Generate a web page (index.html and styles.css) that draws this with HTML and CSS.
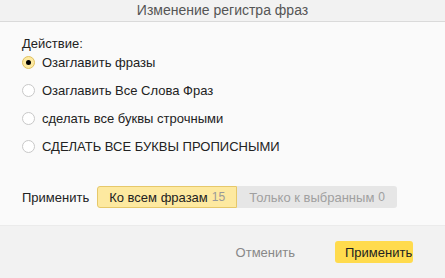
FILE: index.html
```html
<!DOCTYPE html>
<html>
<head>
  <meta charset="UTF-8">
  <link rel="stylesheet" href="styles.css">
</head>
<body>
  <div class="dialog">
    <div class="dialog-header">Изменение регистра фраз</div>
    <div class="dialog-body">
      <div class="section-title">Действие:</div>
      <div class="radio-group">
        <label class="radio checked"><span class="radio-box"></span>Озаглавить фразы</label>
        <label class="radio"><span class="radio-box"></span>Озаглавить Все Слова Фраз</label>
        <label class="radio"><span class="radio-box"></span>сделать все буквы строчными</label>
        <label class="radio"><span class="radio-box"></span>СДЕЛАТЬ ВСЕ БУКВЫ ПРОПИСНЫМИ</label>
      </div>
      <div class="apply-row">
        <span class="apply-label">Применить</span>
        <div class="segmented">
          <span class="seg seg-active">Ко всем фразам <span class="count">15</span></span>
          <span class="seg seg-disabled">Только к выбранным <span class="count">0</span></span>
        </div>
      </div>
    </div>
    <div class="dialog-footer">
      <button class="btn-cancel">Отменить</button>
      <button class="btn-apply">Применить</button>
    </div>
  </div>
</body>
</html>
```

FILE: styles.css
```css
body {
  margin: 0;
  font-family: Arial, "Liberation Sans", sans-serif;
  font-size: 13px;
  color: #222;
  background: #fafafa;
}
.dialog {
  width: 445px;
  height: 278px;
  display: flex;
  flex-direction: column;
  background: #fafafa;
}
.dialog-header {
  height: 21px;
  line-height: 21px;
  text-align: center;
  background: #f2f2f2;
  border-bottom: 1px solid #dadada;
  color: #555;
  font-size: 14px;
}
.dialog-body {
  flex: 1;
  padding: 14px 22px 0 22px;
}
.section-title {
  line-height: 15px;
  margin-bottom: -3px;
}
.radio-group {
  display: flex;
  flex-direction: column;
}
.radio {
  display: flex;
  align-items: center;
  height: 28px;
  gap: 7px;
}
.radio-box {
  width: 11px;
  height: 11px;
  border: 1px solid #c8c8c8;
  border-radius: 50%;
  background: #fff;
  position: relative;
}
.radio.checked .radio-box {
  background: #fde9a0;
  border-color: #e0c060;
}
.radio.checked .radio-box::after {
  content: "";
  position: absolute;
  left: 3px;
  top: 3px;
  width: 5px;
  height: 5px;
  border-radius: 50%;
  background: #000;
}
.apply-row {
  display: flex;
  align-items: center;
  margin-top: 26px;
  gap: 8px;
}
.segmented {
  display: flex;
  height: 22px;
}
.seg {
  display: flex;
  align-items: center;
  justify-content: center;
  gap: 4px;
  box-sizing: border-box;
}
.seg-active {
  width: 140px;
  background: #fde9a0;
  border: 1px solid #e6c86a;
  border-radius: 3px 0 0 3px;
  color: #222;
}
.seg-active .count {
  color: #999;
  font-size: 12px;
}
.seg-disabled {
  width: 160px;
  background: #e6e6e6;
  border-radius: 0 3px 3px 0;
  color: #a0a0a0;
}
.seg-disabled .count {
  font-size: 12px;
}
.dialog-footer {
  height: 52px;
  background: #f2f2f2;
  border-top: 1px solid #ebebeb;
  display: flex;
  align-items: center;
  justify-content: flex-end;
  padding-right: 32px;
  gap: 40px;
}
button {
  font-family: Arial, "Liberation Sans", sans-serif;
  font-size: 13px;
  border: none;
  cursor: pointer;
  height: 22px;
}
.btn-cancel {
  background: none;
  color: #888;
  padding: 0;
}
.btn-apply {
  background: #ffdb4d;
  color: #222;
  border-radius: 3px;
  padding: 0 10px;
  width: 78px;
}
```
